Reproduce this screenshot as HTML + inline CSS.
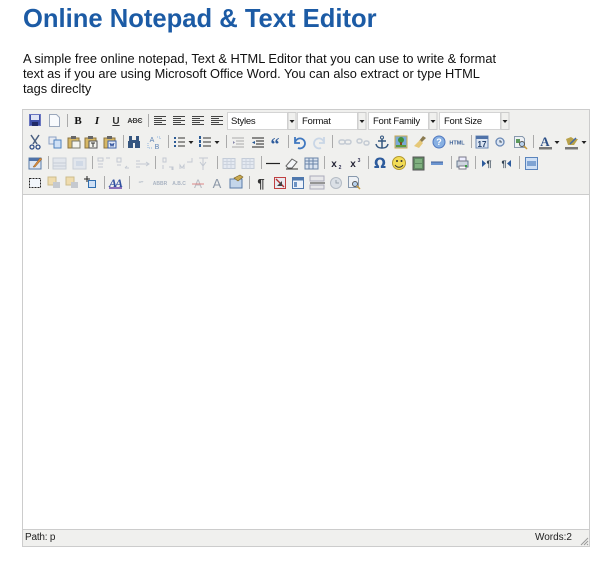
<!DOCTYPE html>
<html><head><meta charset="utf-8"><style>
html,body{margin:0;padding:0;background:#fff;width:610px;height:565px;overflow:hidden;font-family:"Liberation Sans",sans-serif}
h1{position:absolute;left:23px;top:3px;margin:0;font-size:25.6px;line-height:32px;font-weight:bold;color:#1c5ba5;white-space:nowrap}
p{position:absolute;left:23px;top:51px;margin:0;font-size:12.8px;line-height:15px;color:#111;white-space:nowrap}
#ed{position:absolute;left:22px;top:109px;width:566px;height:436px;border:1px solid #ccc;background:#fff}
#tb{position:absolute;left:0;top:0;width:566px;height:84px;background:#f0f0ee;border-bottom:1px solid #ccc}
#st{position:absolute;left:0;top:419px;width:566px;height:16px;background:#f0f0ee;border-top:1px solid #ccc;font-size:10px;line-height:15px;color:#222}
svg{position:absolute;left:0;top:0}
</style></head><body>
<h1>Online Notepad &amp; Text Editor</h1>
<p>A simple free online notepad, Text &amp; HTML Editor that you can use to write &amp; format<br>text as if you are using Microsoft Office Word. You can also extract or type HTML<br>tags direclty</p>
<div id="ed"><div id="tb"></div>
<div id="st"><span style="position:absolute;left:2px;top:0;letter-spacing:-.2px">Path: p</span><span style="position:absolute;right:17px;top:0">Words:2</span></div></div>
<svg width="610" height="565" viewBox="0 0 610 565" font-family="Liberation Sans, sans-serif">
<defs>
<g id="a1"><path d="M-6-4h12M-6-2h8M-6 0h12M-6 2h8M-6 4h12" stroke="#444" fill="none"/></g>
<g id="ar"><path d="M-2.500-1h5L0 2z" fill="#222"/></g>
<g id="grid"><rect x="-6" y="-5" width="12" height="10" fill="#e4e9f1" stroke="#c4ccd8"/><path d="M-6-2h12M-6 1h12M-2-5v10M2-5v10" stroke="#ccd3de" fill="none"/></g>
</defs>
<!-- selects -->
<g font-size="9.500" fill="#111" letter-spacing="-.25">
<rect x="227.500" y="112.500" width="60" height="17" fill="#fff" stroke="#d4d4d4"/><rect x="288" y="112.500" width="8" height="17" fill="#f0f0ee" stroke="#ccc"/><use href="#ar" x="292" y="121"/><text x="231" y="124">Styles</text>
<rect x="297.500" y="112.500" width="60" height="17" fill="#fff" stroke="#d4d4d4"/><rect x="358" y="112.500" width="8" height="17" fill="#f0f0ee" stroke="#ccc"/><use href="#ar" x="362" y="121"/><text x="302" y="124">Format</text>
<rect x="368.500" y="112.500" width="60" height="17" fill="#fff" stroke="#d4d4d4"/><rect x="429" y="112.500" width="8" height="17" fill="#f0f0ee" stroke="#ccc"/><use href="#ar" x="433" y="121"/><text x="373" y="124">Font Family</text>
<rect x="439.500" y="112.500" width="61" height="17" fill="#fff" stroke="#d4d4d4"/><rect x="501" y="112.500" width="8" height="17" fill="#f0f0ee" stroke="#ccc"/><use href="#ar" x="505" y="121"/><text x="444" y="124">Font Size</text>
</g>
<!-- separators -->
<path stroke="#aaa" fill="none" d="M67.500 114v13M148.500 114v13M123.500 135v13M168.500 135v13M226.500 135v13M288.500 135v13M332.500 135v13M471.500 135v13M533.500 135v13M48.500 156v13M92.500 156v13M155.500 156v13M217.500 156v13M261.500 156v13M324.500 156v13M368.500 156v13M451.500 156v13M475.500 156v13M519.500 156v13M104.500 176v13M129.500 176v13M249.500 176v13"/>
<!-- row 1 -->
<rect x="29.500" y="114.500" width="11" height="11" fill="#3d4fa8" stroke="#6a76c0"/><rect x="31" y="115" width="8" height="5" fill="#dfe4f5"/><rect x="32" y="122" width="6" height="4" fill="#202a66"/>
<path d="M49.500 114.500h7l3 3v9h-10z" fill="#f8fafd" stroke="#9aa7bb"/>
<g text-anchor="middle" font-family="Liberation Serif, serif" font-weight="bold" fill="#111">
<text x="78" y="124" font-size="11">B</text><text x="97" y="124" font-size="11" font-style="italic">I</text></g>
<text x="116" y="124" font-size="10" font-weight="bold" text-anchor="middle" fill="#333" text-decoration="underline">U</text>
<text x="135" y="123" font-size="7" font-weight="bold" text-anchor="middle" fill="#333">ABC</text><path d="M129 120.500h12" stroke="#777"/>
<use href="#a1" x="160" y="120.500"/><use href="#a1" x="179" y="120.500"/><use href="#a1" x="198" y="120.500"/><use href="#a1" x="217" y="120.500"/>
<!-- row 2 -->
<path d="M31 135l6 9M39 135l-6 9" stroke="#4a5f80" stroke-width="1.500"/><circle cx="32" cy="147" r="2" fill="none" stroke="#2f4d86" stroke-width="1.300"/><circle cx="38" cy="147" r="2" fill="none" stroke="#2f4d86" stroke-width="1.300"/>
<rect x="49" y="137" width="7" height="7" fill="#e6eaf2" stroke="#8da2c4"/><rect x="54" y="140" width="7" height="8" fill="#cfe0f5" stroke="#4c80bd"/>
<rect x="68" y="138" width="11" height="10" fill="#d7b865" stroke="#8c7440"/><rect x="71" y="136" width="5" height="3" fill="#666"/><rect x="72" y="141" width="8" height="7" fill="#f4f4ee" stroke="#7a7a6a"/>
<rect x="85" y="138" width="11" height="10" fill="#d7b865" stroke="#8c7440"/><rect x="88" y="136" width="5" height="3" fill="#666"/><rect x="89" y="141" width="8" height="7" fill="#f4f4ee" stroke="#555"/><path d="M91 143h4M93 143v4" stroke="#333"/>
<rect x="104" y="138" width="11" height="10" fill="#d7b865" stroke="#8c7440"/><rect x="107" y="136" width="5" height="3" fill="#666"/><rect x="108" y="141" width="8" height="7" fill="#e4ecf8" stroke="#3c5fa8"/><path d="M110 143l1 3 1-2 1 2 1-3" stroke="#2b4d99" fill="none"/>
<g fill="#35557f"><rect x="128" y="141" width="5" height="7"/><rect x="135" y="141" width="5" height="7"/><rect x="129" y="136" width="3" height="5"/><rect x="136" y="136" width="3" height="5"/><rect x="132" y="140" width="4" height="3"/></g>
<text x="152" y="142" font-size="7" fill="#5c83b5" text-anchor="middle">A</text><text x="157" y="149" font-size="7" fill="#5c83b5" text-anchor="middle">B</text><path d="M148 143v5h4M157 137h3v3" stroke="#8fb4dc" fill="none" stroke-dasharray="1 1"/>
<g fill="#2b5a94"><rect x="174" y="137" width="2" height="2"/><rect x="174" y="141" width="2" height="2"/><rect x="174" y="145" width="2" height="2"/><rect x="199" y="136" width="2" height="3"/><rect x="199" y="140" width="2" height="3"/><rect x="199" y="144" width="2" height="3"/></g>
<path d="M178 138h7M178 142h7M178 146h7M203 138h8M203 142h8M203 146h8" stroke="#333" fill="none"/>
<use href="#ar" x="191" y="142"/><use href="#ar" x="217" y="142"/>
<path d="M232 138h12M236 141h8M236 144h8M232 147h12" stroke="#aaa" fill="none"/><path d="M233 141l2 1.500-2 1.500" fill="#88a"/>
<path d="M252 138h12M256 141h8M256 144h8M252 147h12" stroke="#222" fill="none"/><path d="M255 141l-3 1.500 3 1.500z" fill="#2b5a94"/>
<text x="275" y="150" font-size="18" font-weight="bold" font-family="Liberation Serif, serif" text-anchor="middle" fill="#2d5b9c">“</text>
<path d="M295 143a5 5 0 1 1 3 5M295 137v6h5" stroke="#4078c0" stroke-width="1.800" fill="none"/>
<path d="M324 143a5 5 0 1 0-3 5M324 137v6h-5" stroke="#c9d6e6" stroke-width="1.800" fill="none"/>
<g fill="none" stroke="#c4cbd4" stroke-width="1.500"><rect x="339" y="140" width="6" height="4" rx="2"/><rect x="345" y="140" width="6" height="4" rx="2"/><rect x="357" y="139" width="5" height="4" rx="2"/><rect x="364" y="141" width="5" height="4" rx="2"/></g>
<path d="M382 139v9M378 141h8M376 144c1 4 4 4 6 4s5 0 6-4" stroke="#34577f" stroke-width="1.500" fill="none"/><circle cx="382" cy="137.500" r="1.500" fill="none" stroke="#34577f"/>
<rect x="395" y="136" width="12" height="12" fill="#79a9d8" stroke="#c8a850"/><circle cx="401" cy="140" r="3" fill="#3f8f3a"/><rect x="400" y="142" width="2" height="4" fill="#7a4a1e"/><rect x="396" y="145" width="10" height="2" fill="#5f9a3c"/>
<path d="M423 136l3 2-5 5-2-2z" fill="#8a7a50"/><path d="M420 140l3 3-4 5-5-2z" fill="#e6c878"/>
<circle cx="439" cy="142" r="6" fill="#88b0e2" stroke="#5078bf"/><text x="439" y="145" font-size="9" font-weight="bold" fill="#fff" text-anchor="middle">?</text>
<text x="457" y="144.500" font-size="5.500" font-weight="bold" fill="#3b5f96" text-anchor="middle">HTML</text>
<rect x="476" y="136" width="12" height="12" fill="#dce5f2" stroke="#6a88b4"/><rect x="476" y="136" width="12" height="3" fill="#4f72a8"/><text x="482" y="147" font-size="8" font-weight="bold" fill="#24416e" text-anchor="middle">17</text>
<circle cx="500" cy="142" r="4" fill="#dce6f4" stroke="#6a88b4" stroke-width="1.300"/><path d="M500 140v2h2" stroke="#456" fill="none"/>
<path d="M514.500 136.500h8l2 2v9h-10z" fill="#eef1f5" stroke="#8899ad"/><rect x="516" y="139" width="4" height="4" fill="#5d9a5c"/><circle cx="522" cy="144" r="2.500" fill="#b8d2ee" stroke="#555"/><path d="M524 146l3 3" stroke="#c79a3a" stroke-width="1.500"/>
<text x="545" y="146" font-size="13" font-weight="bold" font-family="Liberation Serif, serif" fill="#2d5088" text-anchor="middle">A</text><rect x="539" y="147" width="13" height="2.500" fill="#777"/><use href="#ar" x="557" y="142"/>
<path d="M566 139l5-2 3 2h4l-4 6h-6z" fill="#b9a24a"/><path d="M570 144l6-6" stroke="#3f66a6" stroke-width="1.500"/><rect x="565" y="147" width="13" height="2.500" fill="#777"/><use href="#ar" x="584" y="142"/>
<!-- row 3 -->
<rect x="29" y="158" width="12" height="11" fill="#dfe7f2" stroke="#5a7ba8"/><rect x="29" y="158" width="12" height="3" fill="#4f72a8"/><path d="M33 167l7-9 2 1-7 8z" fill="#d88c40" stroke="#8a5a20" stroke-width=".5"/>
<rect x="53" y="158" width="13" height="11" fill="#e2e6ec" stroke="#c8ced7"/><path d="M53 163h13M53 166h13" stroke="#c5ccd6"/>
<rect x="73" y="158" width="13" height="11" fill="#e2e6ec" stroke="#c8ced7"/><rect x="76" y="161" width="7" height="5" fill="#d0d9e6"/>
<g stroke="#c3c9d2" fill="none"><path d="M98 158h5v3h-5zM98 164h5M98 167h5M106 158h4"/><path d="M117 158h4v4h-4zM117 165h4M125 168h4M125 168l2-2"/><path d="M136 164h13M136 161h4M136 167h4M146 162l3 2-3 2"/><path d="M163 158h3v4h-3zM163 165v4M169 167h4v3M172 167v3"/><path d="M180 169v-4l2 3 2-3v4M187 162h5v-4"/><path d="M199 158h9M203 158v12M200 162l3 4 3-4"/></g>
<use href="#grid" x="229" y="163.500"/><use href="#grid" x="248" y="163.500"/>
<path d="M266 163.500h14" stroke="#222" stroke-width="1.200"/>
<path d="M286 166l6-7 5 3-5 6h-4z" fill="#f4f6f8" stroke="#666"/><path d="M286 169h12" stroke="#333"/>
<rect x="305" y="158" width="13" height="11" fill="#dbe4f0" stroke="#6a84a8"/><path d="M305 161h13M305 164h13M309 158v11M313 158v11" stroke="#6a84a8"/>
<text x="334" y="167" font-size="10" font-weight="bold" fill="#223" text-anchor="middle">x</text><text x="340" y="169" font-size="5" font-weight="bold" fill="#335" text-anchor="middle">2</text>
<text x="353" y="167" font-size="10" font-weight="bold" fill="#223" text-anchor="middle">x</text><text x="359" y="162" font-size="5" font-weight="bold" fill="#335" text-anchor="middle">3</text>
<text x="380" y="168" font-size="14" font-weight="bold" fill="#2d5b9c" text-anchor="middle" font-family="DejaVu Sans, sans-serif">Ω</text>
<circle cx="399" cy="163" r="6.500" fill="#f2dc55" stroke="#b49a30"/><circle cx="397" cy="161" r="1" fill="#333"/><circle cx="401.500" cy="161" r="1" fill="#333"/><path d="M395 165c2 3 6 3 8 0" stroke="#333" fill="none"/>
<rect x="413" y="157" width="11" height="13" fill="#5f8a62" stroke="#555"/><rect x="415" y="159" width="7" height="4" fill="#7fb07f"/><rect x="415" y="164" width="7" height="4" fill="#7fb07f"/>
<rect x="431" y="162" width="12" height="3" fill="#6c95d0"/><path d="M431 162h12" stroke="#3f5f98"/>
<rect x="457" y="161" width="11" height="6" fill="#cfd6e0" stroke="#66788f"/><rect x="459" y="157" width="7" height="4" fill="#eef" stroke="#778"/><rect x="459" y="166" width="7" height="3" fill="#fff" stroke="#778"/><rect x="465" y="165" width="2" height="2" fill="#3aa040"/>
<text x="489" y="167" font-size="9" font-weight="bold" fill="#345" text-anchor="middle">¶</text><path d="M482 160v7l4-3.500z" fill="#2d5b9c"/>
<text x="504" y="167" font-size="9" font-weight="bold" fill="#345" text-anchor="middle">¶</text><path d="M511 160v7l-4-3.500z" fill="#2d5b9c"/>
<rect x="525.500" y="157.500" width="12" height="12" fill="#cfe0f5" stroke="#5a84bc"/><rect x="527" y="161" width="9" height="5" fill="#7ea3d3"/>
<!-- row 4 -->
<rect x="29.500" y="178.500" width="11" height="9" fill="#f2f6fb" stroke="#222" stroke-dasharray="2 1"/>
<rect x="48" y="177" width="8" height="8" fill="#efdcae" stroke="#cdbb8c"/><rect x="53" y="182" width="7" height="6" fill="#c5c9cf"/>
<rect x="66" y="177" width="8" height="8" fill="#efdcae" stroke="#cdbb8c"/><rect x="71" y="182" width="7" height="6" fill="#c5c9cf"/>
<path d="M87 176v6M84 179h6" stroke="#222"/><rect x="88.500" y="180.500" width="7" height="7" fill="#cfe0f5" stroke="#2f6eb0"/>
<text x="115" y="187" font-size="12" font-style="italic" font-weight="bold" font-family="Liberation Serif, serif" fill="#3050a0" text-anchor="middle" letter-spacing="-2">AA</text><rect x="109" y="187" width="13" height="2" fill="#8a70b8"/>
<g font-size="5" fill="#aab4c2" text-anchor="middle" font-weight="bold"><text x="141" y="185">&#8220;&#8221;</text><text x="160" y="185">ABBR</text><text x="179" y="185">A.B.C</text></g>
<text x="198" y="188" font-size="12" fill="#b8bcc4" text-anchor="middle">A</text><path d="M192 184h12" stroke="#d88"/>
<text x="217" y="188" font-size="13" fill="#8c98a8" text-anchor="middle">A</text>
<rect x="230" y="179" width="12" height="9" fill="#c4d6ea" stroke="#5a7ba8"/><path d="M234 178l6-3 3 2-5 4z" fill="#c8a850" stroke="#7a6020" stroke-width=".6"/>
<text x="261" y="188" font-size="13" font-weight="bold" fill="#333" text-anchor="middle">¶</text>
<rect x="274.500" y="177.500" width="11" height="11" fill="#e8eaf0" stroke="#c04040"/><path d="M276 179l8 8" stroke="#b03030" stroke-width="1.300"/><path d="M277 186l5-5v5z" fill="#444"/>
<rect x="292.500" y="177.500" width="11" height="11" fill="#eef3fa" stroke="#4f78ad"/><rect x="293" y="178" width="10" height="2.500" fill="#4f78ad"/><rect x="294" y="182" width="3" height="5" fill="#6e94c4"/>
<path d="M310 176h14v5h-14zM310 185h14v4h-14z" fill="#e8e8ea" stroke="#aab"/><path d="M310 183h15" stroke="#777" stroke-width="1.500"/>
<circle cx="336" cy="183" r="5.500" fill="#dbe0e6" stroke="#b5bcc5"/><path d="M336 180v3h3" stroke="#9aa3ad" fill="none"/>
<path d="M348.500 176.500h8l2 2v9h-10z" fill="#eef1f5" stroke="#8899ad"/><circle cx="355" cy="184" r="2.500" fill="#b8d2ee" stroke="#555"/><path d="M357 186l3 3" stroke="#c79a3a" stroke-width="1.500"/>
<!-- grip -->
<path d="M581 545l7-7M584 545l4-4M587 545l1-1" stroke="#999" fill="none"/>
</svg>
</body></html>
